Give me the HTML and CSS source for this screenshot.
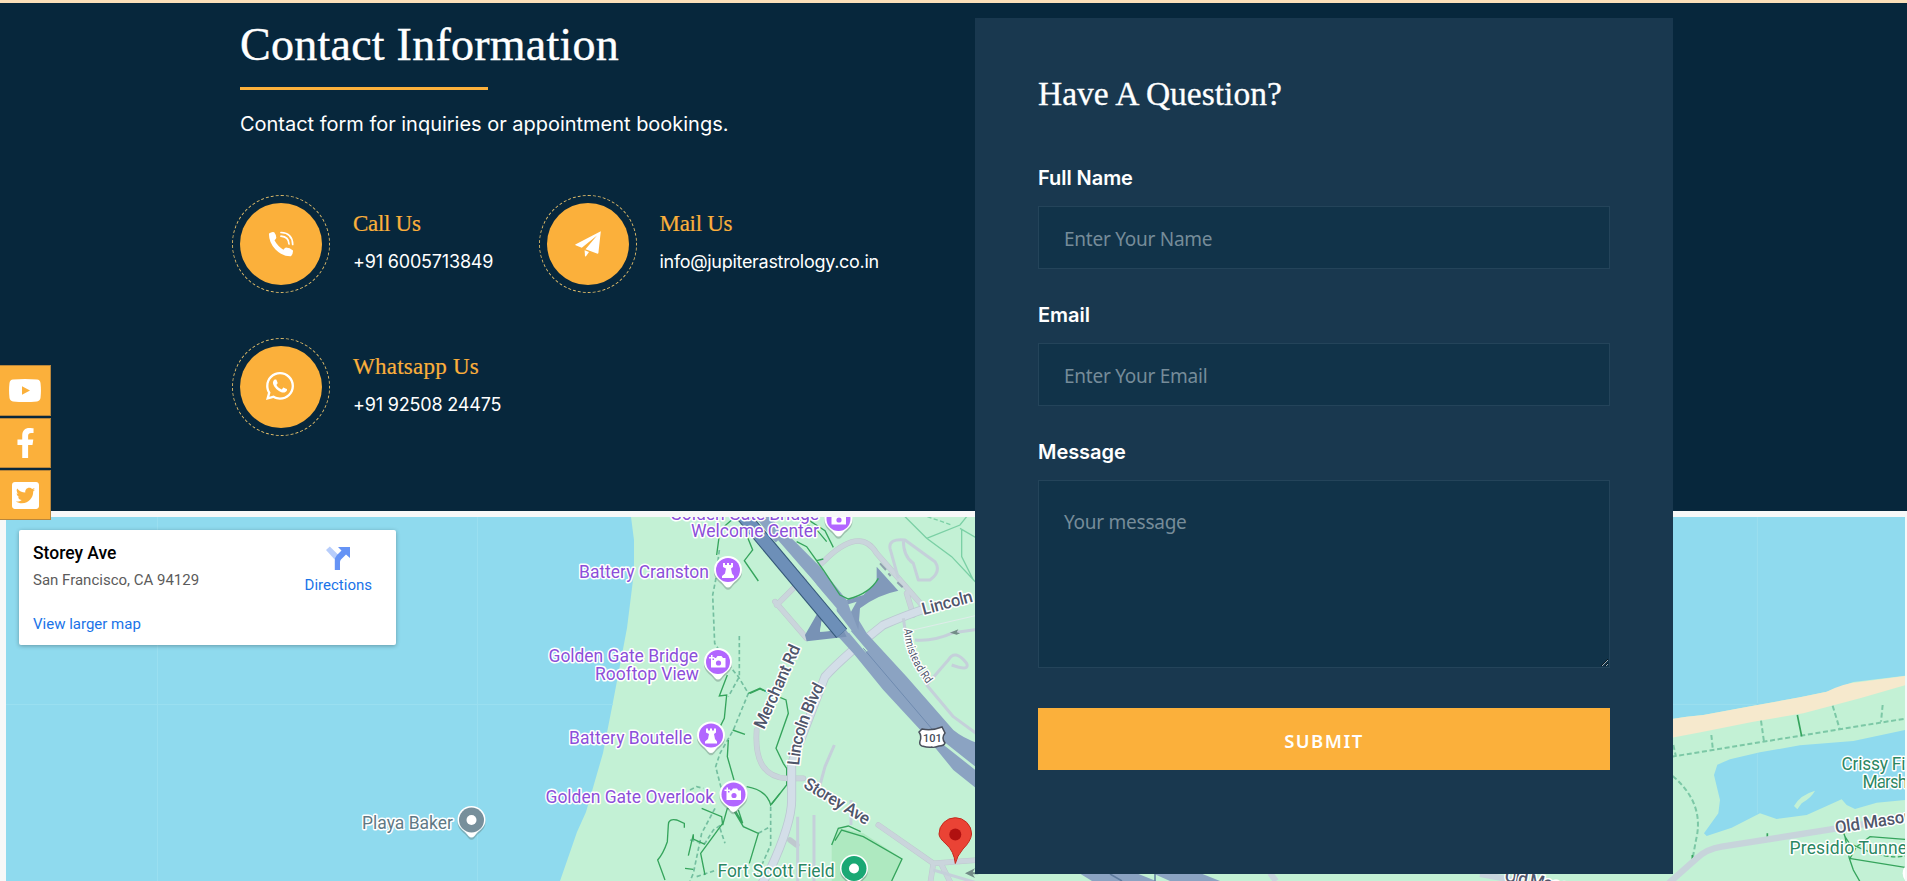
FILE: index.html
```html
<!DOCTYPE html>
<html lang="en">
<head>
<meta charset="utf-8">
<title>Contact</title>
<link rel="stylesheet" href="styles.css">
</head>
<body>
<main class="page">
  <section class="contact">
    <div class="info">
      <h2 class="info-title">Contact Information</h2>
      <p class="info-lead">Contact form for inquiries or appointment bookings.</p>
      <div class="methods">
        <div class="method">
          <span class="badge"><svg width="26" height="26" viewBox="0 0 26 26"><path fill="#fff" d="M1 2.600Q3.800 .5 6.200 1.300Q8.400 4 8.300 7Q7.600 8.400 6.500 9.200Q9.500 15 15.400 18.700Q16.700 16.800 18 16.600Q21.800 16.600 25 19.500Q25.200 23 22.800 25.300Q14.500 25.600 7.500 18.600Q.6 11.200 1 2.600Z"/><g fill="none" stroke="#fff" stroke-linecap="round"><path stroke-width="1.700" d="M13 1.500Q24.500 2 24.700 13.500"/><path stroke-width="1.700" d="M13 5.200Q20.700 5.800 21 13"/></g></svg></span>
          <div><h3 class="method-title">Call Us</h3><p class="method-text">+91 6005713849</p></div>
        </div>
        <div class="method">
          <span class="badge"><svg width="26" height="26" viewBox="0 0 26 26"><path fill="#fff" d="M25.800 .2L.3 13.500Q0 14 .6 14.300L6.800 16.800L22 4.500L10.500 18.300L22.600 22.700Q23.200 22.700 23.400 22ZM9.600 19.300L10 25.200Q10.600 25.800 11.200 25L14 20.900Z"/></svg></span>
          <div><h3 class="method-title mail">Mail Us</h3><p class="method-text mail-text">info@jupiterastrology.co.in</p></div>
        </div>
        <div class="method">
          <span class="badge chat"><svg width="28" height="32" viewBox="0 0 448 512"><path fill="#fff" d="M380.9 97.1C339 55.100 283.200 32 223.900 32c-122.400 0-222 99.600-222 222 0 39.100 10.200 77.300 29.600 111L0 480l117.700-30.900c32.400 17.700 68.900 27 106.100 27h.1c122.300 0 224.100-99.600 224.100-222 0-59.300-25.200-115-67.100-157zm-157 341.600c-33.200 0-65.700-8.900-94-25.700l-6.700-4-69.800 18.300L72 359.200l-4.400-7c-18.500-29.400-28.200-63.300-28.200-98.200 0-101.700 82.800-184.500 184.600-184.500 49.300 0 95.600 19.200 130.400 54.100 34.800 34.900 56.200 81.200 56.100 130.500 0 101.800-84.900 184.600-186.600 184.600zm101.200-138.200c-5.500-2.800-32.800-16.200-37.900-18-5.100-1.900-8.800-2.800-12.500 2.800-3.700 5.600-14.300 18-17.600 21.800-3.200 3.700-6.500 4.200-12 1.400-32.600-16.300-54-29.100-75.500-66-5.700-9.800 5.700-9.100 16.300-30.300 1.800-3.700.9-6.900-.5-9.700-1.400-2.800-12.500-30.100-17.100-41.200-4.500-10.800-9.100-9.300-12.500-9.500-3.200-.2-6.900-.2-10.600-.2-3.700 0-9.700 1.400-14.800 6.900-5.100 5.600-19.400 19-19.400 46.300 0 27.300 19.900 53.700 22.600 57.400 2.800 3.700 39.100 59.700 94.800 83.800 35.200 15.200 49 16.500 66.600 13.900 10.700-1.600 32.800-13.400 37.400-26.400 4.600-13 4.600-24.100 3.200-26.400-1.300-2.500-5-3.900-10.500-6.600z"/></svg></span>
          <div><h3 class="method-title wide">Whatsapp Us</h3><p class="method-text">+91 92508 24475</p></div>
        </div>
      </div>
    </div>
    <form class="panel">
      <h3 class="panel-title">Have A Question?</h3>
      <label class="label" for="name">Full Name</label>
      <input class="field" id="name" type="text" placeholder="Enter Your Name">
      <label class="label" for="email">Email</label>
      <input class="field" id="email" type="email" placeholder="Enter Your Email">
      <label class="label" for="message">Message</label>
      <textarea class="field area" id="message" placeholder="Your message"></textarea>
      <button class="submit" type="button">SUBMIT</button>
    </form>
  </section>

  <section class="map-wrap">
    <svg class="map" viewBox="6 517 1899 364" preserveAspectRatio="xMinYMin slice">
      <defs>
        <g id="pin"><path d="M-14 1A14 14 0 1 1 14 1C14 9 7 11 3 17Q0 20 -3 17C-7 11 -14 9 -14 1Z" fill="#5a6b66" opacity=".35" transform="translate(0 1.200)"/><path d="M-14 0A14 14 0 1 1 14 0C14 8 7 10 3 16Q0 19 -3 16C-7 10 -14 8 -14 0Z" fill="#fff"/></g>
        <g id="castle"><use href="#pin"/><circle r="12" fill="#b266ff"/><path fill="#fff" d="M-5-7h2v2h2v-2h2v2h2v-2h2v4l-2 1.500l1 5L6 6v2H-6V6l3-2.500l1-5L-5-3Z"/></g>
        <g id="camera"><use href="#pin"/><circle r="12" fill="#b266ff"/><path fill="#fff" d="M-7-2h3V-4h2l1.500-2h4L5-4h2.500V5.500H-7ZM-7-7h1.500v2h2v1.500h-2v2H-7v-2h-2V-5h2Z"/><circle cx=".5" cy="1" r="2.600" fill="#b266ff"/></g>
        <path id="blvd" d="M799 766Q801 742 808 724Q814 706 825 686"/>
        <path id="armistead" d="M904 629Q905 645 911 658Q917 672 930 688"/>
      </defs>
      <rect x="6" y="517" width="1899" height="364" fill="#c3f1d5"/>
      <path fill="#8fdaee" d="M0 517H631L634 540V572L627 628L613 702L603 753L586 812L577 832L560 881H0Z"/>
      <path d="M157.500 517V881M6 704.500H613M477.500 517V881" stroke="#9adff0" fill="none"/>

      <!-- Eastern shore -->
      <g transform="translate(1660 500) scale(.33333)">
        <path fill="#8fdaee" d="M0 40H735V527L580 546L500 575L420 592L280 617L130 645L80 650L0 662Z"/>
        <path fill="#f6e9cd" d="M0 662L80 650L130 645L280 617L420 592L500 575Q550 550 600 546L735 528V556L600 595L430 640L280 665L130 695L0 720Z"/>
        <path fill="#8fdaee" d="M735 690L580 723L420 736L300 757L210 778L172 794L162 825L180 900L175 940L132 1000L140 1008L215 983L300 940L350 957L440 945L545 898L560 915L585 927L650 908L735 900Z"/>
        <path fill="#c3f1d5" d="M402 918Q420 885 465 872Q455 892 425 910L412 928Z"/>
        <path stroke="#a5e3ef" stroke-width="2" d="M292 50V610M292 760V940M0 613H290"/>
        <g fill="none" stroke="#7cc8a6" stroke-width="6" stroke-dasharray="15 8"><path d="M35 770L735 656M40 735L48 770M154 705L159 752M303 662L312 725M518 617L540 690M668 615L663 665M38 828Q135 910 108 1020L97 1080"/></g>
        <path d="M412 645L425 709M322 1000V1012M97 1065V1080" stroke="#35a45c" stroke-width="5"/>
        <path d="M20 1155L110 1075Q140 1047 185 1040L735 953" stroke="#c7d4db" stroke-width="19" fill="none"/>
        <g fill="none" stroke="#35a45c" stroke-width="4"><path d="M548 990L555 1010L568 1075L580 1110L600 1145M555 1010L568 1030L590 1040M590 1040L630 1010L735 1018M568 1075L735 1102"/><path stroke-dasharray="14 7" d="M570 1075L590 1040Q680 1080 735 1068"/></g>
        <circle cx="762" cy="1120" r="34" fill="#fff"/>
      </g>

      <!-- Coastal trails -->
      <g transform="translate(530 500) scale(.33333)" fill="none">
        <g stroke="#74bfa0" stroke-width="5" stroke-dasharray="13 8"><path d="M568 150L557 240L548 285L554 430L600 500L625 530L655 580L610 690L570 760L557 800L575 870M628 408V530L595 590M555 925L515 1000L490 1120L480 1143M722 920V1035L680 1130M480 870L500 860L520 865M570 985L585 1030M480 1020L525 1030L550 990L580 970M685 1000L720 980M500 1130L560 1110"/></g>
        <g stroke="#35a45c" stroke-width="4"><path d="M605 60L570 90L560 165M650 105L668 150L643 182L685 243M592 525L568 588L590 585L583 655L560 700L540 740M655 580L690 565L720 580M608 690L645 703M595 720L592 770L612 840M515 925L575 950L578 975L592 925L615 930L638 970L625 930M650 860Q710 870 722 915L750 880M610 930L640 980L685 1000L658 1090M578 970L512 1060L525 1125M463 983V970L440 960Q415 955 415 975L412 1025Q400 1060 383 1080L405 1140M475 1067L490 1003L490 1017L525 1033M465 1105L490 1108"/></g>
      </g>

      <!-- Highway area -->
      <g transform="translate(740 500) scale(.33333)" fill="none">
        <path d="M30 580L60 567L138 600L145 640L108 745L130 790L140 805V855L95 912" stroke="#35a45c" stroke-width="4"/>
        <path d="M275 1143V1030L300 985L370 1000L485 1075L455 1143Z" fill="#aee9c0"/>
        <path d="M275 1035L295 985L325 978L362 995M285 1022L305 990L370 1010L486 1077L455 1143" stroke="#35a45c" stroke-width="4"/>
        <g stroke="#bfc8cf" stroke-width="17" stroke-linecap="round" stroke-linejoin="round"><path d="M105 305L200 415M110 315L160 265L250 185Q360 75 410 160L550 320M500 280L520 345M415 975L580 1090L715 1080M50 690Q40 830 140 835H190M580 1090L570 1155M605 1095L635 1155M150 1020L170 1035"/></g>
        <g stroke="#cad5dc" stroke-width="14" stroke-linecap="round" stroke-linejoin="round"><path d="M105 305L200 415M110 315L160 265L250 185Q360 75 410 160L550 320M500 280L520 345M415 975L580 1090L715 1080M50 690Q40 830 140 835H190M580 1090L570 1155M605 1095L635 1155"/></g>
        <g stroke="#bbc8d2" stroke-width="27"><path d="M560 325Q500 345 430 375Q310 470 255 530L155 790V900Q155 970 90 1110L60 1160"/></g>
        <g stroke="#d3dee8" stroke-width="22"><path d="M560 325Q500 345 430 375Q310 470 255 530L155 790V900Q155 970 90 1110L60 1160"/></g>
        <g stroke="#c5d0da" stroke-width="9" stroke-linejoin="round"><path d="M475 235L450 145Q445 115 495 120L585 185Q605 215 570 240H535L520 190Q490 170 490 120M525 420Q580 425 640 398L715 388M560 555L625 480Q645 445 680 490Q690 515 635 495M560 555L640 650L715 705M490 355L500 420L560 555M283 735L255 800L240 855M173 950V1143M222 945V1143M333 900V975M580 1110L715 1150"/></g>
        <path d="M520 390L715 345M470 613H550M173 130V270" stroke="#dfecea" stroke-width="3"/>
        <path d="M45 50L85 48L170 130L240 200L320 300L380 400L500 530L640 690Q670 715 715 730V870L640 810L550 700L430 570L340 460L290 405L290 325L200 220L100 120Z" fill="#8ba3c2"/>
        <path d="M320 300L370 285L410 245V200L475 272Q410 285 360 325L355 390Z" fill="#8199ba"/>
        <path d="M325 313L350 305L333 335Z" fill="#c3f1d5"/>
        <path d="M195 405L235 335L245 360L240 395L310 390L320 410L200 424Z" fill="#7892b5"/>
        <path d="M245 365L270 393L240 395Z" fill="#c3f1d5"/>
        <path d="M110 125L215 245L330 395" stroke="#c3f1d5" stroke-width="12"/>
        <path d="M325 390L380 455M605 725L715 812" stroke="#c3f1d5" stroke-width="8"/>
        <path d="M370 445L600 715" stroke="#6e8bb0" stroke-width="3"/>
        <path d="M5 42L305 400" stroke="#335778" stroke-width="43"/>
        <path d="M5 42L305 400" stroke="#6d8fb8" stroke-width="37"/>
        <path d="M170 125L200 140L250 210L300 285L325 297Q390 280 415 235M180 60L235 95L260 125M190 50L255 92L280 142M230 182L250 177" stroke="#35a45c" stroke-width="4"/>
        <path d="M490 45L560 115L635 170L715 255M560 115L660 75L680 50M660 85L720 120M665 90V170L700 240" stroke="#7bd0a5" stroke-width="4"/>
        <path d="M562 50L635 75" stroke="#7bd0a5" stroke-width="4" stroke-dasharray="13 7"/>
        <path d="M630 398L655 388L650 397L660 400L650 404ZM675 1120L705 1105L698 1117H715V1123H698L705 1134Z" fill="#728b87"/>
        <path d="M420 190L438 210M445 220L452 228M472 247L488 262" stroke="#8f9fae" stroke-width="6"/>
      </g>
      <path d="M1079 873L1092 881H1220L1200 873ZM1040 873L1060 881" fill="#8ba3c2"/>
      <path d="M1136 873H1152L1170 881H1156Z" fill="#c3f1d5"/>
      <path d="M1110 874L1122 881M1155 874V881" stroke="#5f7c9f" stroke-width="1.500"/>
      <path d="M1270 873L1276 881M1480 874L1512 880" stroke="#c8d5dd" stroke-width="6"/>

      <!-- Place names -->
      <g class="poi">
        <text x="670" y="520" textLength="149">Golden Gate Bridge</text>
        <text x="691" y="537" textLength="128">Welcome Center</text>
        <text x="579" y="578" textLength="130">Battery Cranston</text>
        <text x="548.500" y="662" textLength="149.500">Golden Gate Bridge</text>
        <text x="595" y="680" textLength="104">Rooftop View</text>
        <text x="569" y="744" textLength="123">Battery Boutelle</text>
        <text x="545.500" y="803" textLength="168.500">Golden Gate Overlook</text>
      </g>
      <text class="poi slate" x="362" y="829" textLength="91">Playa Baker</text>
      <g class="poi park">
        <text x="717.500" y="876.500" textLength="117">Fort Scott Field</text>
        <text x="1841.500" y="770" textLength="73">Crissy Fie</text>
        <text x="1862.500" y="788" textLength="45">Marsh</text>
        <text x="1789.500" y="854" textLength="122">Presidio Tunnel</text>
      </g>
      <g class="road">
        <text transform="translate(764 730) rotate(-66)" textLength="90">Merchant Rd</text>
        <text><textPath href="#blvd" textLength="84">Lincoln Blvd</textPath></text>
        <text transform="translate(802.500 787) rotate(31)" textLength="74">Storey Ave</text>
        <text transform="translate(923.500 615) rotate(-15)" textLength="52">Lincoln</text>
        <text transform="translate(1836 833.500) rotate(-9)" textLength="79">Old Mason</text>
        <text transform="translate(1504 881) rotate(10)" textLength="85">Old Mason S</text>
      </g>
      <text class="road small"><textPath href="#armistead" textLength="61" lengthAdjust="spacingAndGlyphs">Armistead Rd</textPath></text>
      <g><path d="M922 729Q932 731 942 727L945 733Q941 738 945 743Q944 746 939 746Q933 748 932 747Q929 748 922 746Q919 745 920 741Q922 736 919 732Z" fill="#fff" stroke="#49505c" stroke-width="1.500"/><text class="shield" x="923" y="742">101</text></g>

      <use href="#camera" x="838.500" y="519"/>
      <use href="#castle" x="728" y="570"/>
      <use href="#camera" x="718" y="662"/>
      <use href="#castle" x="711" y="735.500"/>
      <use href="#camera" x="733.500" y="794.500"/>
      <use href="#pin" x="471.500" y="820"/><circle cx="471.500" cy="820" r="12.500" fill="#778f9b"/><circle cx="471.500" cy="820" r="5" fill="#fff"/>
      <use href="#pin" x="854" y="868.500"/><circle cx="854" cy="868.500" r="12.500" fill="#1aa874"/><circle cx="854" cy="868.500" r="5" fill="#fff"/>
      <path d="M955.300 863.500Q954 851 946 844Q939 838 939 834A16.300 16.300 0 1 1 971.600 834Q971 841 963 849Q957 856 955.300 863.500Z" fill="#ea4335" stroke="#c5291d"/><circle cx="955.300" cy="834.500" r="6" fill="#b01010"/>
    </svg>
    <aside class="place">
      <div class="place-main">
        <strong class="place-name">Storey Ave</strong>
        <span class="place-addr">San Francisco, CA 94129</span>
        <a class="link">View larger map</a>
      </div>
      <div class="directions">
        <svg width="24" height="24" viewBox="0 0 24 24"><path d="M0 4L3.800 .5L13 9.500L10 15Z" fill="#b7cdfb"/><path d="M8.800 24V14.500Q8.800 11.500 11 9L15.500 4.500L12 1H24V12L20 8.500L15 13.500Q14 14.500 14 16V24Z" fill="#6593f5"/></svg>
        <a class="link">Directions</a>
      </div>
    </aside>
  </section>
</main>

<nav class="social">
  <a class="social-item first"><svg width="32" height="23" viewBox="0 0 32 23"><path fill="#fff" fill-rule="evenodd" d="M4 .6Q16-.4 28 .6Q31 1 31.500 4Q32.400 11.500 31.500 19Q31 22 28 22.400Q16 23.400 4 22.400Q1 22 .5 19Q-.4 11.500 .5 4Q1 1 4 .6ZM13 7.300V15.700L21 11.500Z"/></svg></a>
  <a class="social-item"><svg width="19" height="30" viewBox="0 0 320 512"><path fill="#fff" d="M279.140 288l14.220-92.660h-88.910v-60.130c0-25.350 12.420-50.060 52.240-50.060h40.420V6.260S260.430 0 225.360 0c-73.220 0-121.080 44.380-121.080 124.720v70.620H22.890V288h81.390v224h100.170V288z"/></svg></a>
  <a class="social-item"><svg width="27" height="31" viewBox="0 0 448 512"><path fill="#fff" d="M400 32H48C21.500 32 0 53.500 0 80v352c0 26.500 21.500 48 48 48h352c26.500 0 48-21.500 48-48V80c0-26.500-21.500-48-48-48zm-48.900 158.800c.2 2.800.2 5.700.2 8.500 0 86.700-66 186.600-186.600 186.600-37.200 0-71.700-10.800-100.700-29.400 5.300.6 10.400.8 15.800.8 30.700 0 58.900-10.400 81.400-28-28.800-.6-53-19.500-61.300-45.500 10.100 1.500 19.200 1.500 29.600-1.200-30-6.100-52.500-32.500-52.500-64.400v-.8c8.700 4.900 18.900 7.900 29.600 8.300a65.447 65.447 0 0 1-29.200-54.600c0-12.200 3.200-23.400 8.900-33.100 32.300 39.800 80.800 65.800 135.200 68.600-9.300-44.500 24-80.600 64-80.600 18.900 0 35.900 7.900 47.900 20.700 14.800-2.800 29-8.300 41.600-15.800-4.900 15.200-15.200 28-28.800 36.100 13.200-1.400 26-5.100 37.800-10.200-8.900 13.100-20.100 24.700-32.900 34z"/></svg></a>
</nav>
</body>
</html>
```

FILE: styles.css
```css
* { box-sizing: border-box; }
body, h2, h3, p { margin: 0; }
body { font-family: Inter, "Liberation Sans", sans-serif; color: #fff; }

.page { height: 881px; overflow: hidden; border-top: 3px solid #fbdfb9; }

.contact {
  position: relative;
  z-index: 1;
  height: 508px;
  padding: 15px 234px 0 240px;
  display: flex;
  justify-content: space-between;
  align-items: flex-start;
  background: #07273c;
}

.info-title {
  height: 72px;
  width: 248px;
  white-space: nowrap;
  border-bottom: 3px solid #fbb03b;
  font: 400 46px/54px "Liberation Serif", serif;
  letter-spacing: .25px;
  -webkit-text-stroke: .4px currentColor;
}
.info-lead { margin-top: 19px; font-size: 20px; line-height: 30px; letter-spacing: -.02px; }
.methods {
  display: grid;
  grid-template-columns: 306.5px 350px;
  row-gap: 60.5px;
  margin-top: 64px;
}
.method { display: flex; gap: 31px; height: 82px; }
.badge {
  display: flex;
  flex: none;
  align-items: center;
  justify-content: center;
  width: 82px;
  height: 82px;
  border-radius: 50%;
  background: #fbb03b;
  outline: 1px dashed #d9b768;
  outline-offset: 7px;
}
.chat { padding: 0 2px 2px 0; }
.method-title {
  margin-top: 6px;
  color: #fbb03b;
  font: 400 23px/30px "Liberation Serif", serif;
  letter-spacing: -.3px;
  -webkit-text-stroke: .2px currentColor;
}
.wide { letter-spacing: .25px; }
.method-text { margin-top: 9px; font-size: 18px; line-height: 28px; letter-spacing: -.18px; }
.mail-text { letter-spacing: -.3px; }

.panel {
  flex: none;
  width: 698px;
  height: 856px;
  padding: 54px 63px 0;
  display: flex;
  flex-direction: column;
  background: #19384f;
}
.panel-title {
  font: 400 33.5px/44px "Liberation Serif", serif;
  -webkit-text-stroke: .3px currentColor;
}
.label { margin: 48px 0 13px; font-weight: 600; font-size: 20px; line-height: 29px; letter-spacing: -.05px; }
.field + .label { margin-top: 32px; }
.field {
  display: block;
  width: 572px;
  height: 63px;
  padding: 2px 25px 0;
  border: 1px solid #24445a;
  border-radius: 0;
  background: #113349;
  color: #fff;
  font: 400 19px "Noto Sans", sans-serif;
  letter-spacing: -.25px;
}
.field::placeholder { color: #768c99; opacity: 1; }
.area { height: 188px; padding-top: 28px; }
.submit {
  margin-top: 40px;
  height: 62px;
  padding: 2px 0 0;
  border: 0;
  background: #fbb03b;
  color: #fff;
  font: 600 18.5px "Noto Sans", sans-serif;
  letter-spacing: 1.5px;
}

.map-wrap { position: relative; height: 370px; padding: 6px 2px 0 6px; background: #f7f8f8; }
.map { display: block; width: 1899px; height: 364px; font-family: Roboto, sans-serif; }
.poi { font-size: 17.500px; fill: #8c4fd9; stroke: #fff; stroke-width: 3px; stroke-linejoin: round; paint-order: stroke; }
.slate { fill: #607985; }
.park { fill: #2b8763; }
.road { font-size: 17px; font-weight: 500; fill: #50566b; stroke: #fff; stroke-width: 3px; stroke-linejoin: round; paint-order: stroke; }
.small { font-size: 11.500px; font-weight: 400; }
.shield { font-size: 11px; font-weight: 500; fill: #444b58; }

.place {
  position: absolute;
  left: 19px;
  top: 19px;
  width: 377px;
  height: 115px;
  padding: 11px 24px 0 14px;
  display: flex;
  justify-content: space-between;
  border-radius: 2px;
  background: #fff;
  box-shadow: 0 1px 4px rgba(0, 0, 0, .3);
  font: 15px/20px Roboto, sans-serif;
}
.place-main { display: flex; flex-direction: column; }
.place-name { color: #000; font-weight: 500; font-size: 17.500px; line-height: 24px; }
.place-addr { margin-top: 5px; color: #5b5b5b; }
.link { color: #1a73e8; }
.place-main .link { margin-top: 24px; }
.directions { display: flex; flex-direction: column; align-items: center; padding-top: 5px; }
.directions .link { margin-top: 5px; }

.social {
  position: fixed;
  z-index: 2;
  left: 0;
  top: 365px;
  display: flex;
  flex-direction: column;
  gap: 2px;
}
.social-item {
  display: flex;
  align-items: center;
  justify-content: center;
  width: 51px;
  height: 50px;
  border: 1px solid #b8863c;
  border-left: 0;
  background: #fbb03b;
}
.first { height: 51px; }
```
